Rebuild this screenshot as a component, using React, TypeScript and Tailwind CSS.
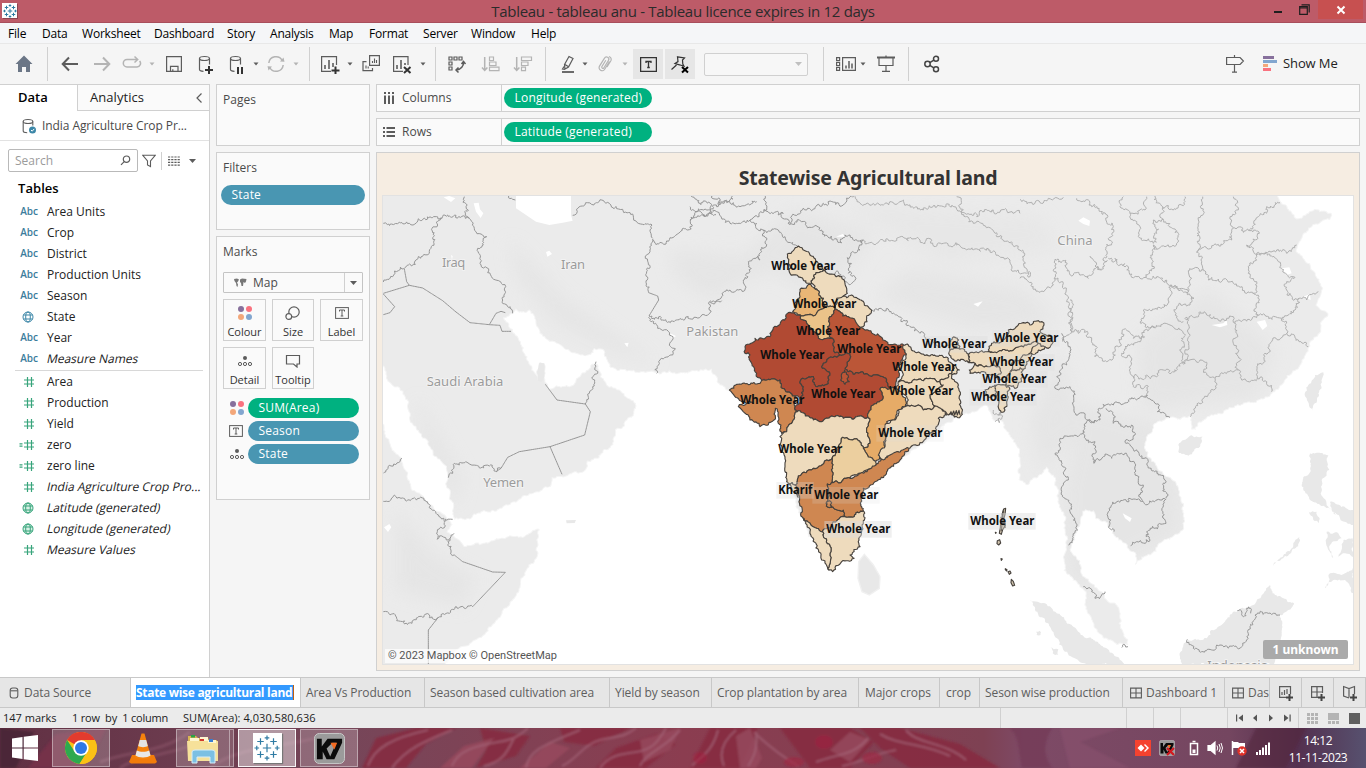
import React from "react";

type Pt = [number, number];

/* ---------- geometry helpers for natural looking borders ---------- */
const noise = (x: number, y: number) => {
  const v = Math.sin(x * 12.9898 + y * 78.233) * 43758.5453;
  return v - Math.floor(v) - 0.5;
};

function split(a: Pt, b: Pt, out: Pt[], amp: number) {
  const dx = b[0] - a[0];
  const dy = b[1] - a[1];
  const len = Math.hypot(dx, dy);
  if (len < 7) {
    out.push(b);
    return;
  }
  const sign = a[0] < b[0] || (a[0] === b[0] && a[1] < b[1]) ? 1 : -1;
  const mx = (a[0] + b[0]) / 2;
  const my = (a[1] + b[1]) / 2;
  const r = noise(mx, my) * amp * sign * Math.min(1, 18 / len);
  const m: Pt = [mx - dy * r, my + dx * r];
  split(a, m, out, amp);
  split(m, b, out, amp);
}

function rough(points: string, closed = false, amp = 0.5) {
  const pts = points
    .trim()
    .split(/\s+/)
    .map((p) => p.split(",").map(Number) as Pt);
  const out: Pt[] = [pts[0]];
  for (let i = 1; i < pts.length; i++) split(pts[i - 1], pts[i], out, amp);
  if (closed) split(pts[pts.length - 1], pts[0], out, amp);
  return "M" + out.map((p) => p[0].toFixed(1) + " " + p[1].toFixed(1)).join("L") + (closed ? "Z" : "");
}

const Line = ({ p, amp = 0.5 }: { p: string; amp?: number }) => <path d={rough(p, false, amp)} />;
const Area = ({ p, amp = 0.5 }: { p: string; amp?: number }) => <path d={rough(p, true, amp)} />;

/* ---------- map data ---------- */
const WEST_SEA =
  "385,385 420,360 430,368 460,362 478,395 500,440 530,455 570,480 610,495 645,495 655,478 680,480 692,510 700,530 740,540 840,550 880,545 1005,540 1020,560 1025,580 1050,600 1100,620 1200,660 1300,740 1250,900 1300,1050 1380,1150 1560,1100 1650,900 1820,740 1850,900 1850,1440 190,1440 210,1420 265,1370 330,1330 380,1270 420,1220 450,1145 485,1100 492,1020 470,1020 455,1032 370,1045 340,1055 265,1068 235,1038 215,1025 235,1005 200,970 150,930 115,900 90,840 75,800 50,780 30,740 20,700 10,690 10,530 22,530 35,575 70,595 95,640 100,690 120,720 155,755 175,800 210,830 220,920 235,990 290,982 320,965 380,955 440,920 525,890 530,865 630,840 635,815 670,805 685,780 712,765 720,720 740,715 775,670 780,640 745,610 700,590 675,560 660,520 630,540 590,585 520,595 508,575 508,525 495,515 483,540 488,570 460,520 455,500 430,450 400,410";

const EAST_SEA =
  "-180,675 -130,665 -100,648 -75,695 -60,692 -20,750 -5,800 -5,870 25,885 80,835 105,865 110,920 130,970 140,1040 130,1140 150,1160 190,1200 200,1265 230,1320 290,1365 325,1365 325,1350 300,1300 298,1255 255,1215 225,1190 185,1150 180,1110 158,1090 160,1060 180,1010 190,965 220,965 225,985 255,995 285,1040 310,1060 345,1090 345,1125 365,1110 410,1085 415,1065 450,1050 480,1030 492,1010 492,940 470,880 430,850 385,800 375,770 385,735 410,700 450,685 480,690 510,680 515,720 530,725 535,700 560,685 640,655 700,640 750,620 770,600 830,540 860,490 870,460 900,430 915,385 925,370 890,345 905,310 910,295 890,260 870,220 830,180 840,155 880,105 930,90 935,70 880,60 830,85 815,65 775,20 775,0 1010,0 1010,1440 -700,1440 -700,1100 -420,850 -240,720";

const COUNTRY_WEST = [
  "22,100 70,97 100,100 140,88 200,80 215,75 240,76 268,85 280,85",
  "200,82 185,105 168,115 166,170 160,190 120,210 85,235 22,276",
  "265,20 270,50 280,85 300,125 320,135 332,140 322,165 308,190 312,220 335,248 368,272 385,300 380,330 395,350 410,370",
  "945,18 980,38 1005,48 1006,72 1020,74",
  "590,76 620,48 665,38 700,40 740,58 770,72 800,103 828,105 830,145",
  "830,148 870,162 895,140 935,120 948,85 1006,72",
  "830,148 822,185 808,205 812,245 818,308",
  "820,376 845,415 880,435 884,470 898,476 890,495 852,510 842,550",
  "820,376 860,390 920,388 960,382 998,372 1000,335 1037,332",
  "660,515 665,550 650,560 650,590 640,610 628,642",
  "22,850 45,828 78,805",
  "22,934 40,934 55,915 75,925 130,925 155,940 180,970 205,995 230,988",
  "205,997 184,1025 184,1048 222,1045 234,1030",
  "222,1045 215,1065 235,1095",
  "22,1265 62,1292 108,1300 125,1283 150,1272 160,1283 186,1283",
  "186,1283 220,1270 230,1258 255,1250 290,1250",
  "217,863 230,850 235,820 250,825 352,834 362,845 375,835",
  "398,18 410,28 418,30",
];
const COUNTRY_WEST_STRAIGHT = [
  "85,237 92,275 100,286 140,294 200,332 240,366 282,398 340,404 372,406 378,424 405,424",
  "340,404 360,370 375,364 388,368",
  "22,310 100,286",
  "22,312 56,350 42,368 22,374",
  "818,308 845,318 848,330 820,376",
  "508,583 543,630 628,642 643,665 626,735 522,770 430,785 395,802 375,835 360,845",
  "522,770 558,853",
  "235,1095 260,1115 350,1146 388,1147 290,1250",
  "186,1283 157,1320 157,1422",
];

const CHINA_LINES = [
  "0,28 30,38 60,38 85,25 130,22",
  "170,25 215,50 262,75 282,125 270,165 250,205 262,212 240,238 205,265 160,255 140,235 128,212 105,208 103,265",
  "210,198 225,228 245,240",
  "265,205 285,205 300,225 325,230 335,262 378,262 420,265 455,285 505,305",
  "310,20 300,50 330,70 375,60 380,20",
  "330,70 360,110 365,145 400,160 410,130 400,90 430,88 475,130 470,160 435,170 400,165 400,215 375,262",
  "405,18 425,48 460,60 485,45 495,20",
  "430,88 430,52",
  "548,20 535,90 530,185 545,215 550,240 505,242 515,265 505,305 522,325 510,345 470,350 468,370 490,395",
  "530,188 590,165 635,150 640,112 635,90 650,60 640,20",
  "640,115 690,122 718,130 680,165 725,190 770,180 800,190 830,165",
  "690,122 715,80 740,50 780,38",
  "725,190 700,215 685,250 710,275 700,310 718,330 715,375",
  "730,190 775,215 785,235 825,262 800,275 800,300 838,325 860,330 895,305",
  "838,325 825,360 790,390",
  "550,242 565,270 640,280 700,312",
  "505,305 465,285 450,320 425,355 370,360 365,385 375,410 405,412 450,405 490,430",
  "495,385 540,365 560,375 620,385 640,380 645,400 700,380 735,375 785,385 800,420 790,435 750,460 735,490 720,520 712,565",
  "645,400 650,430 640,460 655,500 655,540",
  "495,385 495,520 540,510 560,525 560,550 585,565 655,540 665,570 712,565 740,575 755,605",
  "585,565 580,600 545,640 510,680",
  "800,430 835,450 865,470",
  "490,430 485,475 495,520 455,548 430,540 375,565 340,560 340,590 385,590 385,605 370,620",
  "405,415 375,420 370,440 355,455 315,470 305,490 335,510 330,545 345,562",
  "103,265 130,280 145,320 150,380 155,405",
  "155,405 155,420 175,430 190,418 215,450 235,500 260,515 280,505 285,470 300,460 305,440 320,420 340,445 375,440",
  "0,265 25,275 40,298 75,300 100,285 103,265",
];
const COUNTRY_EAST = [
  "125,430 145,470 140,525 110,560 105,595 150,590 162,655 195,680 225,690 240,690 245,655 280,645 320,638 370,620 405,640 412,665 450,682",
  "225,690 200,695 190,722 160,738 120,745 105,790 135,840 145,870 125,905 155,950 160,990 173,1020 145,1065",
  "190,722 205,750 225,755 222,820 250,800 275,805 300,792 325,800 345,830 345,855 370,885 368,932",
  "258,655 280,675 280,700 310,712 335,705 345,735 318,760 355,785 385,815 415,855 435,880 438,925",
  "438,930 415,928 385,942 360,930 290,935 265,965 270,1000 282,1025",
  "435,930 438,1000 405,1015 380,1025 390,1050 350,1055 332,1067",
  "190,1190 215,1205 225,1225 245,1215 255,1205",
  "502,1348 520,1375 545,1385 600,1365 650,1372 680,1350 690,1310 705,1275 740,1268 780,1275",
  "652,1262 670,1280 680,1255 692,1255 692,1270",
  "305,1372 315,1365 324,1370",
];
const MIDDLE_LINES = [
  "160,-105 170,-60 120,-30 160,0 170,30 155,65 150,90 115,95 120,125 100,150 95,180 60,180 35,200 0,212",
  "-60,-70 -20,-45 20,-55 60,-20 120,-30",
  "-60,-30 -20,-60 20,-70 60,-90 80,-105",
  "0,-105 30,-75 90,-70 140,-85",
  "160,0 205,0 225,20 262,48",
  "160,-60 220,-50 235,-20 335,0 370,30 420,15 460,30",
  "235,-20 290,-60 340,-80 400,-75 430,-105",
  "460,30 450,60 420,80 415,120 435,140 425,160 400,150 375,132",
  "485,240 510,235 560,255 600,290 630,310 670,335 730,360 790,390",
];
const MIDDLE_PROVINCES = [
  "460,30 500,40 560,25 630,30 700,40 760,55 840,60 900,90 960,140",
  "420,-105 450,-80 520,-75 580,-90 640,-60 720,-70 800,-40 850,-60 930,-50",
  "740,-100 760,-60 790,-20 860,20 930,60 960,140",
];

const CREAM = "#eedbbd";
const OCHRE = "#cf8751";
const STATES: [string, string][] = [
  [CREAM, "265,48 285,62 300,75 325,105 345,122 312,135 305,160 280,150 240,130 235,100 232,72 250,62"],
  [CREAM, "312,135 345,122 365,132 395,140 405,160 412,190 390,205 375,235 345,232 340,205 322,180 305,160"],
  ["#e9b676", "302,163 322,180 340,205 345,232 310,258 270,255 248,245 255,225 270,200 270,178"],
  ["#ebc389", "345,232 375,235 357,265 355,300 368,325 350,325 325,325 312,305 290,280 270,255 310,258"],
  [CREAM, "375,235 380,205 410,203 425,195 440,203 485,240 470,265 450,292 430,280 415,260 398,258"],
  ["#b14a33", "235,248 270,255 290,280 312,305 325,325 350,325 368,325 375,368 390,375 350,395 335,410 360,430 345,465 315,465 310,440 278,445 280,480 270,510 258,498 225,480 210,450 155,450 125,400 120,375 105,370 105,350 135,325 145,330 180,320 200,290 215,272"],
  ["#bb5637", "375,235 398,258 415,260 450,292 490,312 530,335 580,345 590,370 570,400 568,430 560,475 542,475 530,450 490,435 445,430 415,425 405,415 422,380 410,368 390,375 375,368 368,325 355,300 357,265"],
  ["#b14a33", "390,375 410,368 422,380 405,415 415,425 445,430 490,435 530,450 542,475 510,478 520,500 490,525 475,563 420,562 400,565 365,558 335,575 310,570 262,545 255,530 270,510 280,480 278,445 310,440 315,465 345,465 360,430 335,410 350,395"],
  ["#bb5637", "404,420 414,435 418,455 405,463 392,450 396,430"],
  [OCHRE, "58,480 80,463 150,460 155,450 210,450 225,480 258,498 255,530 262,545 245,580 230,605 215,610 205,580 202,537 196,535 192,570 175,584 150,590 120,570 85,530 130,520 100,515 75,500"],
  [CREAM, "262,545 310,570 335,575 365,558 400,565 420,562 475,563 470,600 480,640 460,655 445,632 398,622 380,655 368,680 350,690 310,715 265,738 255,765 235,760 225,710 210,620 230,605 245,580"],
  ["#e6ab67", "510,478 542,475 560,475 590,520 565,540 555,570 530,575 525,650 505,690 490,690 460,655 480,640 470,600 475,563 490,525 520,500"],
  ["#eccf9f", "398,622 445,632 460,655 490,690 498,705 440,735 420,745 370,758 368,680 380,655"],
  [CREAM, "235,760 255,765 262,790 270,802 250,785"],
  [OCHRE, "265,738 310,715 350,690 368,680 370,758 352,762 355,780 350,825 400,840 405,860 370,875 360,895 335,905 320,895 280,865 275,830 262,790 255,765"],
  [OCHRE, "370,758 420,745 498,705 520,685 560,660 605,648 570,690 530,725 495,755 460,775 455,830 460,843 405,860 400,840 350,825 355,780 352,762"],
  [CREAM, "460,843 463,870 447,930 450,950 420,975 432,985 395,995 368,1025 357,1020 360,970 350,930 335,905 360,895 370,875 405,860"],
  [CREAM, "280,865 320,895 335,905 350,930 360,970 357,1020 335,990 318,940 300,905"],
];
const STATES_EAST: [string, string][] = [
  [CREAM, "70,135 85,135 110,158 150,168 205,175 220,195 205,225 180,245 150,235 110,240 55,245 70,225 50,205 75,180"],
  [CREAM, "55,245 110,240 150,235 180,245 190,255 150,285 165,318 130,330 115,315 75,320 85,300 50,265"],
  [CREAM, "220,195 238,210 215,230 235,255 240,300 242,348 205,345 165,318 150,285 190,255 180,245 205,225"],
  [CREAM, "210,150 240,147 265,165 265,188 240,182 215,175"],
  [CREAM, "212,120 225,112 236,120 240,147 210,150"],
  [CREAM, "75,320 115,315 130,330 165,318 200,345 175,355 170,390 100,435 50,455 0,478 -5,465 15,440 20,370 45,360 55,330"],
  [CREAM, "265,165 320,155 365,152 400,150 440,135 475,130 455,160 420,180 395,190 395,210 375,245 355,240 360,205 330,200 285,190 268,188"],
  [CREAM, "325,150 335,130 365,125 385,90 430,68 450,75 475,62 492,75 480,95 510,105 520,125 505,145 495,140 475,130 440,135 400,150 365,152"],
  [CREAM, "475,130 495,140 455,160 440,185 430,208 395,210 395,190 420,180 440,165"],
  [CREAM, "395,210 430,208 425,245 405,265 375,255 380,235"],
  [CREAM, "268,210 285,190 330,200 360,205 362,222 310,215 270,220"],
  [CREAM, "315,270 345,255 350,290 325,292"],
  [CREAM, "350,255 375,255 388,262 382,300 372,335 358,330 350,290"],
];

const LABELS: [number, number, string, number][] = [
  [803, 266, "Whole Year", 64],
  [824, 304, "Whole Year", 64],
  [828, 331, "Whole Year", 64],
  [869, 349, "Whole Year", 64],
  [792, 355, "Whole Year", 64],
  [924, 367, "Whole Year", 64],
  [954, 344, "Whole Year", 64],
  [1026, 338, "Whole Year", 64],
  [1021, 362, "Whole Year", 64],
  [1014, 379, "Whole Year", 64],
  [1003, 397, "Whole Year", 64],
  [772, 400, "Whole Year", 64],
  [843, 394, "Whole Year", 64],
  [921, 391, "Whole Year", 64],
  [910, 433, "Whole Year", 64],
  [810, 449, "Whole Year", 64],
  [846, 495, "Whole Year", 64],
  [795, 490, "Kharif", 34],
  [858, 529, "Whole Year", 64],
  [1002, 521, "Whole Year", 64],
];

function IndiaMap() {
  return (
    <svg viewBox="21 18 2910 1404" className="block h-[468px] w-[970px]" fontFamily="'Noto Sans', sans-serif">
      <defs>
        <filter id="haze" x="-30%" y="-30%" width="160%" height="160%">
          <feGaussianBlur stdDeviation="26" />
        </filter>
      </defs>
      <rect x="0" y="0" width="3000" height="1500" fill="#ebebeb" />
      <g fill="#e3e3e3" filter="url(#haze)" opacity=".7">
        <path d="M400 150L560 320 700 420 850 520 700 480 540 400 420 260Z" />
        <path d="M880 180L1100 200 1250 60 1500 130 1350 330 1180 240 1000 330 900 260Z" />
        <path d="M1500 320L1800 420 2050 400 1950 300 1600 240Z" />
        <path d="M2050 480L2120 700 2000 850 1960 700Z" />
        <path d="M2280 450L2500 300 2700 480 2640 620 2300 660Z" />
        <path d="M2120 640L2400 720 2420 1030 2080 1200 2060 900Z" />
        <path d="M120 620L150 780 240 950 260 860 180 720Z" />
        <path d="M60 960L180 1100 300 1160 260 1250 60 1200Z" />
        <path d="M1400 40L2000 80 2050 180 1700 220Z" opacity=".6" />
      </g>
      <g fill="#fff" stroke="#f5f5f5" strokeWidth="6">
        <Area p={WEST_SEA} />
        <g transform="translate(1932 0)">
          <Area p={EAST_SEA} />
        </g>
      </g>
      <g fill="#fff">
        <Area p={WEST_SEA} />
        <path d="M420 18V55L450 75 480 95 520 105 560 98 590 92 585 76V10H420Z" />
        <path d="M203 22L220 18 238 25 225 36ZM293 40L308 38 312 58 322 70 314 84 300 65ZM510 186L520 182 528 192 514 200ZM745 460L758 458 754 472ZM882 430L900 438 888 446ZM225 195L230 198 228 210ZM24 1012L40 1002 46 1012 36 1026Z" />
        <path d="M1380 140L1400 132 1410 140ZM1792 342L1820 334 1806 350Z" />
        <g transform="translate(1932 0)">
          <Area p={EAST_SEA} />
          <path d="M175 92L190 82 210 92 208 108 190 102ZM785 235L808 232 815 250 800 255ZM575 405L610 400 620 390 622 405 600 412ZM710 395L735 390 742 408 728 420ZM850 320L870 312 872 330ZM308 970L335 985 330 996 315 985Z" />
        </g>
      </g>
      <g fill="#e8e8e8">
        <path d="M484 545L490 518 505 520 505 560 498 575 486 572ZM570 991L600 990 596 999 572 1000Z" />
        <path d="M1448 1115L1465 1093 1492 1125 1512 1160 1510 1195 1480 1215 1458 1205 1446 1165Z" stroke="#f0f0f0" strokeWidth="4" />
        <g transform="translate(1932 0)">
          <Area p="910,547 905,595 878,662 856,620 865,585 885,555" />
          <Area p="475,765 510,737 548,740 540,770 505,797 475,785" />
          <Area p="30,1230 75,1240 110,1270 160,1310 200,1345 250,1372 290,1400 315,1425 210,1425 130,1380 90,1310 45,1260" />
          <Area p="485,1425 482,1385 505,1350 560,1345 575,1320 610,1300 650,1265 700,1245 750,1185 765,1215 822,1240 780,1275 785,1330 760,1425" />
          <Area p="870,790 925,795 928,840 905,870 902,910 925,950 950,975 915,950 880,935 850,900 848,870 868,850" />
          <Area p="850,900 890,920 910,945 870,930" />
          <Area p="865,965 890,965 895,1000 880,990" />
          <Area p="930,935 1000,960 1000,1005 960,985 935,960" />
          <Area p="920,1025 955,1030 965,1045 930,1065 940,1105 918,1060" />
          <Area p="970,1050 998,1045 1000,1100 975,1090 955,1100" />
          <Area p="760,1128 800,1085 838,1040 836,1060 790,1105" />
          <Area p="915,1195 930,1150 975,1150 1000,1130 1000,1210 975,1170 940,1170" />
          <Area p="48,1325 60,1322 62,1335 50,1335" />
          <Area p="90,1370 115,1378 115,1395 98,1390" />
        </g>
      </g>
      <g fontSize="39" fill="#9b9b9b" stroke="#f4f4f4" strokeWidth="5" paintOrder="stroke">
        <text x="198" y="231" textLength="70">Iraq</text>
        <text x="555" y="236" textLength="72">Iran</text>
        <text x="152" y="587" textLength="230">Saudi Arabia</text>
        <text x="322" y="892" textLength="122">Yemen</text>
        <text x="931" y="439" textLength="156">Pakistan</text>
        <text x="2044" y="165" textLength="106">China</text>
        <text x="2494" y="1439" textLength="182">Indonesia</text>
      </g>
      <g fill="none" stroke="#969696" strokeWidth="3">
        {COUNTRY_WEST.map((p) => (
          <Line key={p} p={p} amp={0.9} />
        ))}
        {COUNTRY_WEST_STRAIGHT.map((p) => (
          <Line key={p} p={p} amp={0} />
        ))}
        <g transform="translate(1932 0)">
          {COUNTRY_EAST.map((p) => (
            <Line key={p} p={p} amp={0.9} />
          ))}
        </g>
        <g transform="translate(1002 120)">
          {MIDDLE_LINES.map((p) => (
            <Line key={p} p={p} amp={1} />
          ))}
        </g>
      </g>
      <g fill="none" stroke="#b0b0b0" strokeWidth="3">
        <g transform="translate(1932 0)">
          {CHINA_LINES.map((p) => (
            <Line key={p} p={p} amp={1} />
          ))}
        </g>
        <g transform="translate(1002 120)">
          {MIDDLE_PROVINCES.map((p) => (
            <Line key={p} p={p} amp={1} />
          ))}
        </g>
        <g transform="translate(1512 330)">
          <Line p="570,0 575,50 570,90 555,110 548,125" amp={1} />
          <Line p="345,365 358,368 362,335 340,330" amp={1} />
        </g>
      </g>
      <g stroke="#47423d" strokeWidth="3.4" strokeLinejoin="round">
        <g transform="translate(1002 120)">
          {STATES.map(([fill, p]) => (
            <path key={p} fill={fill} d={rough(p, true, 0.6)} />
          ))}
          <path fill={OCHRE} d="M350 815l9-3 6 6-4 7 5 4-8 4-9-4 2-7z" />
        </g>
        <g transform="translate(1512 330)">
          {STATES_EAST.map(([fill, p]) => (
            <path key={p} fill={fill} d={rough(p, true, 0.6)} />
          ))}
          <path fill="none" d="M208 345l5-10 3 10 5-12 3 12 5-13 3 13 5-14 3 14" strokeWidth="3.500" />
          <g fill="#cfc2ac">
            <path d="M371 627l6-2-2 18-4 16-6 4 2-22zM362 665l12-4 2 16-8 12-4 14-6-3 3-18zM352 722l7-3 3 10-6 6-5-4zM394 838l6 6 4 12-6 2-5-10z" />
            <path d="M363 776l4 1-3 4zM346 697l3 1-2 2zM376 806l5 3-1 4-4-4zM384 815l6-2 3 6-5 4z" />
            <path d="M366 640l8 30M362 650l14 34M370 632l-6 60" />
          </g>
        </g>
      </g>
      {LABELS.map(([x, y, text, w]) => {
        const cx = (x - 376) * 3;
        const cy = (y - 190) * 3;
        return (
          <g key={x + "-" + y}>
            <rect x={cx - (w * 3) / 2 - 5} y={cy - 24} width={w * 3 + 10} height="50" fill="#dcdcdc" fillOpacity={y > 520 ? 0.45 : x > 930 || x === 795 ? 0.3 : y === 433 || y === 495 ? 0.2 : 0} />
            <text x={cx - (w * 3) / 2 + 1} y={cy + 13} textLength={w * 3} lengthAdjust="spacingAndGlyphs" fontSize="36" fontWeight="700" fill="#111">
              {text}
            </text>
          </g>
        );
      })}
    </svg>
  );
}

/* ---------- small drawing helpers ---------- */
const Ico = ({ className = "", w = 20, h = 20, c = "#5c5c5c", sw = 1.2, children }: { className?: string; w?: number; h?: number; c?: string; sw?: number; children: React.ReactNode }) => (
  <svg width={w} height={h} viewBox={`0 0 ${w} ${h}`} fill="none" stroke={c} strokeWidth={sw} className={"shrink-0 " + className}>
    {children}
  </svg>
);
const Caret = ({ className = "", c = "#5c5c5c" }: { className?: string; c?: string }) => (
  <svg width="6" height="4" viewBox="0 0 6 4" fill={c} className={"shrink-0 " + className}>
    <path d="M.5 0.5h5L3 3.5z" />
  </svg>
);
const Sep = ({ className = "" }: { className?: string }) => <span className={"h-[34px] w-px shrink-0 bg-[#d0d0d0] " + className} />;

const Dots4 = ({ className = "" }: { className?: string }) => (
  <svg width="16" height="16" viewBox="0 0 16 16" className={"shrink-0 " + className}>
    <circle cx="4" cy="4" r="3" fill="#87709c" />
    <circle cx="12" cy="4" r="3" fill="#f9727f" />
    <circle cx="4" cy="12" r="3" fill="#f3a77a" />
    <circle cx="12" cy="12" r="3" fill="#82a6cf" />
  </svg>
);
const DetailIcon = ({ className = "" }: { className?: string }) => (
  <Ico w={16} h={12} sw={1} className={className}>
    <circle cx="8" cy="3" r="2" fill="#5c5c5c" stroke="none" />
    <circle cx="3" cy="9" r="1.6" />
    <circle cx="8" cy="9" r="1.6" />
    <circle cx="13" cy="9" r="1.6" />
  </Ico>
);
const TextIcon = ({ w = 14, h = 12, className = "", sw = 1, c }: { w?: number; h?: number; className?: string; sw?: number; c?: string }) => (
  <Ico w={w} h={h} sw={sw} c={c} className={className}>
    <rect x=".6" y=".6" width={w - 1.2} height={h - 1.2} />
    <path d={`M${w / 2 - 2.5} ${h / 2 - 1.5}v-1.5h5v1.5M${w / 2} ${h / 2 - 3}v6M${w / 2 - 1.3} ${h / 2 + 3}h2.6`} />
  </Ico>
);
const Burst = ({ size = 14 }: { size?: number }) => (
  <svg width={size} height={size} viewBox="0 0 28 28" stroke="#2f7ba3" strokeWidth={size < 20 ? 2 : 1.3} fill="none">
    <path d="M14 9.5v9M9.500 14h9M14 0.500v5M11.500 3h5M14 22.500v5M11.500 25h5M.5 14h5M3 11.500v5M22.500 14h5M25 11.500v5M7 3.500v7M3.500 7h7M21 3.500v7M17.500 7h7M7 17.500v7M3.500 21h7M21 17.500v7M17.500 21h7" />
  </svg>
);

/* ---------- window chrome ---------- */
function TitleBar() {
  return (
    <div className="relative flex h-[23px] items-start border-b border-[#a84e5c] bg-[#bd5b68]">
      <div className="ml-[2px] mt-[3px] flex size-[15px] items-center justify-center bg-white shadow-[1px_1px_0_#8a4450]">
        <Burst size={14} />
      </div>
      <div className="absolute inset-x-0 top-[1px] text-center font-['Open_Sans'] text-[15px] leading-[21px] tracking-[-0.29px] text-[#2b2b2b]">Tableau - tableau anu - Tableau licence expires in 12 days</div>
      <div className="ml-auto flex h-[19px] items-start">
        <span className="mr-[17px] mt-[11px] h-[2px] w-[8px] bg-[#1e1e1e]" />
        <Ico w={11} h={11} c="#1e1e1e" className="mr-[8px] mt-[4px]">
          <path d="M.7 2.700h7.600v7.600H.7zM.7 4h7.600" />
          <path d="M2.500 .8h7.700v7.700" />
        </Ico>
        <span className="mr-[3px] flex h-[19px] w-[45px] items-center justify-center bg-[#c75050]">
          <Ico w={10} h={10} c="#fff" sw={2}>
            <path d="M1.500 1.500l7 7M8.500 1.500l-7 7" />
          </Ico>
        </span>
      </div>
    </div>
  );
}

function MenuBar() {
  const cls = "shrink-0 whitespace-nowrap";
  return (
    <div className="flex h-[21px] items-center border-b border-[#e8e8e8] bg-[#f5f6f8] pl-[8px] pt-[2px] font-['Open_Sans'] text-[12px] tracking-[-0.2px] text-black">
      <span className={cls + " w-[34px]"}>File</span>
      <span className={cls + " w-[40px]"}>Data</span>
      <span className={cls + " w-[72px]"}>Worksheet</span>
      <span className={cls + " w-[73px]"}>Dashboard</span>
      <span className={cls + " w-[43px]"}>Story</span>
      <span className={cls + " w-[59px]"}>Analysis</span>
      <span className={cls + " w-[40px]"}>Map</span>
      <span className={cls + " w-[54px]"}>Format</span>
      <span className={cls + " w-[48px]"}>Server</span>
      <span className={cls + " w-[60px]"}>Window</span>
      <span className={cls}>Help</span>
    </div>
  );
}

function Toolbar() {
  const dim = "#b4b4b4";
  return (
    <div className="flex h-[40px] items-center bg-[#f5f5f5]">
      <Ico className="ml-[14px]" c="none">
        <path d="M10 1.500L18.500 10H16v8h-4v-5H8v5H4v-8H1.500z" fill="#6b7686" />
      </Ico>
      <Sep className="ml-[13px]" />
      <Ico className="ml-[12px]" sw={2}>
        <path d="M18 10H3M9 3.500L2.700 10 9 16.500" />
      </Ico>
      <Ico className="ml-[12px]" sw={2} c={dim}>
        <path d="M2 10h15M11 3.500L17.300 10 11 16.500" />
      </Ico>
      <Ico className="ml-[10px]" sw={1.5} c={dim}>
        <path d="M15.500 5.500H5a3.700 3.700 0 0 0 0 7.400h10a3.600 3.600 0 0 0 2.600-6M12.500 2.500l3.200 3-3.200 3" />
      </Ico>
      <Caret className="ml-[7px]" c={dim} />
      <Ico className="ml-[9px]">
        <path d="M2.600 2.600h14.800v14.800H2.600zM6.500 17.400v-5h7.500v5M8.800 17.400v-2.200" />
      </Ico>
      <Ico className="ml-[12px]">
        <ellipse cx="8.500" cy="4.500" rx="5" ry="2" />
        <path d="M3.500 4.500v11c0 1 2 1.700 4 1.800M13.500 4.500v6" />
        <path d="M9 16h8M13 12v8" stroke="#333" strokeWidth="2" />
      </Ico>
      <Ico className="ml-[10px]">
        <ellipse cx="9.500" cy="4.500" rx="5" ry="2" />
        <path d="M4.500 4.500v11c0 1 2 1.700 4 1.800M14.500 4.500v6" />
        <path d="M12 13v7M16 13v7" stroke="#333" strokeWidth="2" />
      </Ico>
      <Caret className="ml-[7px]" />
      <Ico className="ml-[7px]" c={dim} sw={1.500}>
        <path d="M2.800 9a7.200 7.200 0 0 1 13.500-2.500M17.200 11a7.200 7.200 0 0 1-13.500 2.500" />
        <path d="M14 7.500l4.500.3-1-4.200zM6 12.500l-4.500-.3 1 4.200z" fill={dim} stroke="none" />
      </Ico>
      <Caret className="ml-[7px]" c={dim} />
      <Sep className="ml-[10px]" />
      <Ico className="ml-[10px]" w={22}>
        <path d="M16.500 11V2.600H1.600v14.800H11" />
        <path d="M5 15v-4M9 15V6M13 13V9" strokeWidth="1.600" />
        <path d="M11.500 16.500h8M15.500 12.500v8" stroke="#333" strokeWidth="2" />
      </Ico>
      <Caret className="ml-[5px]" />
      <Ico className="ml-[8px]">
        <path d="M8.600 1.600h9.800v9.800H8.600zM5.500 7.600H2v9h9.500v-2.600" />
        <path d="M11.500 9V7M13.500 9V4.500M15.500 9V6M5 14.500v-3M7.200 14.500v-2" strokeWidth="1.100" />
      </Ico>
      <Ico className="ml-[11px]" w={22}>
        <path d="M16 11V2.600H1.600v14.800H11" />
        <path d="M5 15v-4M9 15V6M13 11V9" strokeWidth="1.600" />
        <path d="M12 13l6.500 6M18.500 13l-6.500 6" stroke="#333" strokeWidth="2" />
      </Ico>
      <Caret className="ml-[6px]" />
      <Sep className="ml-[9px]" />
      <Ico className="ml-[11px]">
        <path d="M2 3h3v3H2zM7 3h3v3H7zM12 3h3v3h-3zM2 8h3v3H2zM2 13h3v3H2z" />
        <path d="M16.500 8c.3 4-2.500 7.500-7 8M14.500 10l2-2.500 2 2.500M11.500 13.500L9 16l2.500 2.500" strokeWidth="1.500" />
      </Ico>
      <Ico className="ml-[14px]" c={dim}>
        <path d="M3.700 3v13M1 13.500l2.700 3 2.700-3" strokeWidth="1.500" />
        <path d="M8.500 3h4v3.500h-4zM8.500 8h6.500v3.500H8.500zM8.500 13.200h9.500v3.500H8.500z" />
      </Ico>
      <Ico className="ml-[12px]" c={dim}>
        <path d="M3.700 3v13M1 13.500l2.700 3 2.700-3" strokeWidth="1.500" />
        <path d="M8.500 3h10v3.500h-10zM8.500 8h6.500v3.500H8.500zM8.500 13.200h4v3.500h-4z" />
      </Ico>
      <Sep className="ml-[12px]" />
      <Ico className="ml-[12px]">
        <path d="M6.500 10.500L11 2.500l4 2-4.500 8.500-3.500 2zM7 10.500l3.500 2.300M6 12.500l-1.500 2.500 2.500.5" />
        <path d="M4 18h12" strokeWidth="1.800" />
      </Ico>
      <Caret className="ml-[4px]" />
      <Ico className="ml-[7px]" c={dim}>
        <path d="M14.500 7.500l-4.800 7.700a3 3 0 0 1-5.200-3.100l5-8a2.200 2.200 0 0 1 4 2.300l-4.700 7.600a1.200 1.200 0 0 1-2-1.200l4-6.500M12 13l4-6.500a3 3 0 0 0-2-4" />
      </Ico>
      <Caret className="ml-[7px]" c={dim} />
      <span className="ml-[5px] flex h-[30px] w-[30px] shrink-0 items-center justify-center bg-[#e6e6e6]">
        <TextIcon w={17} h={15} sw={1.300} c="#333" />
      </span>
      <span className="ml-[2px] flex h-[30px] w-[30px] shrink-0 items-center justify-center bg-[#e6e6e6]">
        <Ico c="#333">
          <path d="M7.500 2.800l7 1.200-2 2 .3 4 1.200 2.300-4.500-1.500-4.500-1.200 3-2zM6.500 11L1.500 15.500" />
          <path d="M12 13l6 5.500M18 13l-6 5.500" stroke="#000" strokeWidth="2" />
        </Ico>
      </span>
      <span className="ml-[9px] flex h-[23px] w-[104px] shrink-0 items-center justify-end rounded-[2px] border border-[#d0d0d0] bg-[#f7f7f7] pr-[5px]">
        <svg width="7" height="4" fill="#c0c0c0">
          <path d="M0 0h7L3.500 4z" />
        </svg>
      </span>
      <Sep className="ml-[15px]" />
      <Ico className="ml-[11px]" w={22}>
        <path d="M1.600 3.600h3v3h-3zM1.600 8.500h3v3h-3zM1.600 13.400h3v3h-3zM7.600 3.600h12.800v12.800H7.600z" />
        <path d="M11 14.500v-3M14 14.500V7M17 14.500V9.500" strokeWidth="1.500" />
      </Ico>
      <Caret className="ml-[3px]" />
      <Ico className="ml-[10px]" w={20}>
        <path d="M1 3.500h18" strokeWidth="2" />
        <path d="M3 4v7.500h14V4M10 11.500V17M6 17.400h8M10 1.500v2" />
      </Ico>
      <Sep className="ml-[12px]" />
      <Ico className="ml-[13px]" sw={1.500} c="#444">
        <circle cx="5.500" cy="10" r="2.700" />
        <circle cx="14" cy="4.800" r="2.500" />
        <circle cx="14" cy="15.200" r="2.500" />
        <path d="M7.800 8.600l4-2.500M7.800 11.400l4 2.500" />
      </Ico>
      <Ico className="ml-auto" w={22}>
        <path d="M2.600 3.500h13.500l3.300 3.500-3.300 3.500H2.600zM10.500 1v2.500M10.500 10.500V18M8 18.200h5" />
      </Ico>
      <svg width="14" height="16" className="ml-[17px] shrink-0">
        <path d="M0 0h11v3H0z" fill="#87709c" />
        <path d="M0 4h14v3H0z" fill="#82a6cf" />
        <path d="M0 8h5v3H0z" fill="#f3a77a" />
        <path d="M0 12h8v3H0z" fill="#f9727f" />
      </svg>
      <span className="ml-[6px] mr-[28px] w-[55px] whitespace-nowrap font-['Open_Sans'] text-[13px] tracking-[-0.1px] text-[#222]">Show Me</span>
    </div>
  );
}

/* ---------- data pane ---------- */
type Kind = "abc" | "globe" | "hash" | "calc" | "gglobe";
const FIELDS_TOP: [Kind, string, boolean?][] = [
  ["abc", "Area Units"],
  ["abc", "Crop"],
  ["abc", "District"],
  ["abc", "Production Units"],
  ["abc", "Season"],
  ["globe", "State"],
  ["abc", "Year"],
  ["abc", "Measure Names", true],
];
const FIELDS_BOTTOM: [Kind, string, boolean?][] = [
  ["hash", "Area"],
  ["hash", "Production"],
  ["hash", "Yield"],
  ["calc", "zero"],
  ["calc", "zero line"],
  ["hash", "India Agriculture Crop Pro...", true],
  ["gglobe", "Latitude (generated)", true],
  ["gglobe", "Longitude (generated)", true],
  ["hash", "Measure Values", true],
];

function FieldIcon({ kind }: { kind: Kind }) {
  if (kind === "abc") return <span className="font-['Open_Sans'] text-[10px] font-semibold tracking-[-0.1px] text-[#3c7d9c]">Abc</span>;
  if (kind === "globe" || kind === "gglobe") {
    const g = kind === "gglobe";
    return (
      <Ico w={12} h={12} sw={1} c={g ? "#37a47b" : "#3c87a8"} className="mr-[2px]">
        <circle cx="6" cy="6" r="5" fill={g ? "#d7f0e5" : "none"} />
        <ellipse cx="6" cy="6" rx="2.300" ry="5" />
        <path d="M1.500 4h9M1.500 8h9" />
      </Ico>
    );
  }
  return (
    <Ico w={18} h={12} sw={1.200} c="#37a47b" className="mr-[4px]">
      <path d="M9.500 1v10M13.500 1v10M6 4h10M6 8h10" />
      {kind === "calc" && <path d="M1.500 4.800h3M1.500 7.200h3" />}
    </Ico>
  );
}

const FieldRow = ({ kind, text, italic }: { kind: Kind; text: string; italic?: boolean }) => (
  <div className="flex h-[21px] items-center">
    <span className="flex w-[29px] shrink-0 justify-center pl-[29px]">
      <FieldIcon kind={kind} />
    </span>
    <span className={"ml-[18px] whitespace-nowrap text-[12px] text-[#222] " + (italic ? "-skew-x-[12deg]" : "")}>{text}</span>
  </div>
);

function DataPane() {
  return (
    <div className="flex w-[210px] shrink-0 flex-col border-r border-t border-[#d0d0d0] bg-white">
      <div className="flex h-[26px]">
        <div className="flex w-[77px] items-center pl-[18px] text-[13px] font-semibold text-black">Data</div>
        <div className="flex flex-1 items-center border-b border-l border-[#d0d0d0] bg-[#fafafa] pl-[12px] text-[13px] tracking-[0.05px] text-[#222]">
          Analytics
          <Ico w={8} h={12} className="ml-auto mr-[6px]">
            <path d="M6.500 1.500L2 6l4.500 4.500" />
          </Ico>
        </div>
      </div>
      <div className="flex h-[30px] items-center border-b border-[#e2e2e2] pl-[22px] text-[12px] text-[#4a4a4a]">
        <Ico w={14} h={16} sw={1.100}>
          <ellipse cx="6" cy="3.500" rx="4.800" ry="2" />
          <path d="M1.200 3.500v9.500c0 1 2 1.700 4 1.700M10.800 3.500v4" />
          <circle cx="10.500" cy="12" r="3.500" fill="#3c87a8" stroke="none" />
          <path d="M9 12l1.200 1.200 2-2.300" stroke="#fff" strokeWidth="1" />
        </Ico>
        <span className="ml-[6px] whitespace-nowrap tracking-[-0.08px]">India Agriculture Crop Pr...</span>
      </div>
      <div className="mt-[8px] flex h-[23px] items-center pl-[8px]">
        <div className="flex h-[23px] w-[130px] items-center justify-between rounded-[2px] border border-[#b9b9b9] px-[6px] text-[12px] text-[#9b9b9b]">
          Search
          <Ico w={11} h={11}>
            <circle cx="6.500" cy="4.200" r="3.200" />
            <path d="M4.200 6.600L1 9.800" />
          </Ico>
        </div>
        <Ico w={14} h={14} sw={1.100} className="ml-[4px]">
          <path d="M.8 1.300h12.400L8.500 7v5.500l-3-1.500V7z" />
        </Ico>
        <span className="ml-[5px] h-[18px] w-px bg-[#d0d0d0]" />
        <svg width="12" height="10" className="ml-[6px]" stroke="#5c5c5c" strokeWidth="1.200" strokeDasharray="2.200 1">
          <path d="M0 1h12M0 3.700h12M0 6.400h12M0 9.100h12" />
        </svg>
        <svg width="7" height="4" className="ml-[9px]" fill="#5c5c5c">
          <path d="M0 0h7L3.500 4z" />
        </svg>
      </div>
      <div className="mt-[7px] flex h-[20px] items-center pl-[18px] text-[13px] font-semibold tracking-[0.05px] text-black">Tables</div>
      <div className="mt-[2px] pb-px">
        {FIELDS_TOP.map(([k, t, i]) => (
          <FieldRow key={t} kind={k} text={t} italic={i} />
        ))}
      </div>
      <div className="ml-[15px] mr-[6px] h-px bg-[#d8d8d8]" />
      <div>
        {FIELDS_BOTTOM.map(([k, t, i]) => (
          <FieldRow key={t} kind={k} text={t} italic={i} />
        ))}
      </div>
    </div>
  );
}

/* ---------- shelves ---------- */
const card = "border border-[#d0d0d0] bg-[#fafafa]";
const pill = "flex h-[20px] items-center rounded-full pl-[10.5px] text-[12px] font-medium tracking-[0.2px] text-white";

function MarkButton({ label, children }: { label: string; children: React.ReactNode }) {
  return (
    <div className="flex h-[42px] flex-col items-center justify-between border border-[#d0d0d0] bg-[#fafafa] pt-[5px] text-[11px] leading-[16px] text-[#333]">
      <span className="flex h-[16px] items-center">{children}</span>
      <span>{label}</span>
    </div>
  );
}

function SideShelves() {
  return (
    <div className="ml-[6px] flex w-[154px] shrink-0 flex-col gap-[6px] text-[12px] text-[#4a4a4a]">
      <div className={card + " h-[62px] pl-[6px] pt-[6px]"}>Pages</div>
      <div className={card + " h-[78px] px-[4px] pt-[6px]"}>
        <div className="pl-[2px] leading-[18px]">Filters</div>
        <div className={pill + " mt-[8px] bg-[#4996b2]"}>State</div>
      </div>
      <div className={card + " h-[264px] px-[6px] pt-[6px]"}>
        <div className="leading-[18px]">Marks</div>
        <div className="mt-[11px] flex h-[21px] w-[140px] items-center rounded-[1px] border border-[#c4c4c4]">
          <svg width="13" height="10" viewBox="0 0 13 10" className="ml-[10px]" fill="#777">
            <path d="M0 1l3-.5 2 1-1 2-1 1 1 2-.5 2.500-1-1L2 5 .5 3zM6 1.500L8 .5 12.500 1 12 3.500 11 5 9.500 4 9 8 7.500 8 7 5 6 4z" />
          </svg>
          <span className="ml-[6px]">Map</span>
          <span className="ml-auto flex h-full w-[18px] items-center justify-center border-l border-[#d0d0d0]">
            <svg width="7" height="4" fill="#5c5c5c">
              <path d="M0 0h7L3.500 4z" />
            </svg>
          </span>
        </div>
        <div className="mt-[6px] grid grid-cols-[43px_42px_43px] gap-[6px]">
          <MarkButton label="Colour">
            <Dots4 />
          </MarkButton>
          <MarkButton label="Size">
            <Ico w={16} h={15} sw={1.200}>
              <circle cx="9" cy="6" r="5.200" />
              <circle cx="3.800" cy="10.500" r="2.900" fill="#fafafa" />
            </Ico>
          </MarkButton>
          <MarkButton label="Label">
            <TextIcon />
          </MarkButton>
          <MarkButton label="Detail">
            <DetailIcon />
          </MarkButton>
          <MarkButton label="Tooltip">
            <Ico w={16} h={14} sw={1.200}>
              <path d="M1.500 1.500h13v8.500h-2.500v3l-3.500-3h-7z" />
            </Ico>
          </MarkButton>
        </div>
        <div className="mt-[9px] flex flex-col gap-[3px]">
          <div className="flex items-center">
            <Dots4 className="ml-[6px] mr-[3px]" />
            <div className={pill + " w-[111px] bg-[#00b180]"}>SUM(Area)</div>
          </div>
          <div className="flex items-center">
            <TextIcon className="ml-[6px] mr-[5px]" />
            <div className={pill + " w-[111px] bg-[#4996b2]"}>Season</div>
          </div>
          <div className="flex items-center">
            <DetailIcon className="ml-[6px] mr-[3px]" />
            <div className={pill + " w-[111px] bg-[#4996b2]"}>State</div>
          </div>
        </div>
      </div>
    </div>
  );
}

function Shelf({ icon, label, value }: { icon: React.ReactNode; label: string; value: string }) {
  return (
    <div className={card + " flex h-[28px] items-center text-[12px] text-[#4a4a4a]"}>
      <div className="flex h-full w-[125px] items-center border-r border-[#d0d0d0] pl-[6px]">
        <span className="w-[13px]">{icon}</span>
        <span className="ml-[6px]">{label}</span>
      </div>
      <div className={pill + " ml-[2px] w-[148px] bg-[#00b180]"}>{value}</div>
    </div>
  );
}

function VizArea() {
  return (
    <div className="ml-[6px] flex w-[984px] flex-col gap-[6px]">
      <Shelf
        label="Columns"
        value="Longitude (generated)"
        icon={
          <svg width="12" height="12" stroke="#5c5c5c" strokeWidth="2" fill="none">
            <path d="M2 0v2M6 0v2M10 0v2M2 3.500v8.500M6 3.500v8.500M10 3.500v8.500" />
          </svg>
        }
      />
      <Shelf
        label="Rows"
        value="Latitude (generated)"
        icon={
          <svg width="12" height="12" stroke="#5c5c5c" strokeWidth="2" fill="none">
            <path d="M0 2h2M0 6h2M0 10h2M3.500 2H12M3.500 6H12M3.500 10H12" />
          </svg>
        }
      />
      <div className="h-[519px] border border-[#d0d0d0] bg-[#f6ede2] px-[5px]">
        <div className="flex h-[42px] items-center justify-center pt-[8px] font-['Noto_Sans'] text-[19.5px] font-bold tracking-[-0.16px] text-[#333]">Statewise Agricultural land</div>
        <div className="relative h-[470px] w-[972px] overflow-hidden border border-[#e2e2e2] bg-white">
          <IndiaMap />
          <div className="absolute bottom-px left-[2px] bg-white/70 px-[3px] font-['Roboto','Liberation_Sans'] text-[11px] leading-[14px] text-[#555]">© 2023 Mapbox © OpenStreetMap</div>
          <div className="absolute bottom-[5px] right-[5px] flex h-[19px] w-[85px] items-center justify-center rounded-[2px] bg-[#aaaaaa] font-['Noto_Sans'] text-[12px] font-bold text-white">1 unknown</div>
        </div>
      </div>
    </div>
  );
}

/* ---------- bottom bars ---------- */
const GridIcon = ({ className = "" }: { className?: string }) => (
  <Ico w={12} h={12} sw={1.100} className={className}>
    <path d="M.6 1.100h10.800v9.800H.6zM6 1v10M.6 6h10.800" />
  </Ico>
);

function SheetTabs() {
  const tab = "flex h-full shrink-0 items-center overflow-hidden whitespace-nowrap border-r border-[#c8c8c8] ";
  return (
    <div className="flex h-[31px] border-b border-t border-[#c8c8c8] bg-[#e6e6e6] text-[12px] tracking-[-0.08px] text-[#5e5e5e]">
      <div className={tab + "w-[131px] pl-[9px]"}>
        <Ico w={10} h={12} sw={1.100} className="mr-[5px]">
          <rect x="1.200" y="1" width="7.600" height="10" rx="2.500" />
          <path d="M1.500 3.800h7" />
        </Ico>
        Data Source
      </div>
      <div className={tab + "w-[170px] bg-white pl-[5px]"}>
        <span className="h-[15px] w-[158px] border-r border-[#c06010] bg-[#3399ff] text-[12px] font-bold leading-[15px] tracking-[-0.29px] text-white">State wise agricultural land</span>
      </div>
      <div className={tab + "w-[124px] pl-[5px]"}>Area Vs Production</div>
      <div className={tab + "w-[185px] pl-[5px]"}>Season based cultivation area</div>
      <div className={tab + "w-[102px] pl-[5px]"}>Yield by season</div>
      <div className={tab + "w-[147px] pl-[5px]"}>Crop plantation by area</div>
      <div className={tab + "w-[81px] pl-[6px]"}>Major crops</div>
      <div className={tab + "w-[40px] pl-[6px]"}>crop</div>
      <div className={tab + "w-[143px] pl-[5px]"}>Seson wise production</div>
      <div className={tab + "w-[102px] pl-[7px]"}>
        <GridIcon className="mr-[4px]" />
        Dashboard 1
      </div>
      <div className={tab + "w-[45px] pl-[7px]"}>
        <GridIcon className="mr-[4px]" />
        Das
      </div>
      <div className={tab + "w-[32px] pl-[8px]"}>
        <Ico w={17} h={16}>
          <path d="M12.500 9V1.600H1.600v10.800H8M4 10V7M6.500 10V5M9 9V4" />
          <path d="M8 12.500h7M11.500 9v7" stroke="#444" strokeWidth="2" />
        </Ico>
      </div>
      <div className={tab + "w-[32px] pl-[8px]"}>
        <Ico w={17} h={16}>
          <path d="M12.500 8V1.600H1.600v10.800H8M7 1.600v11M1.600 7h11" />
          <path d="M8 12.500h7M11.500 9v7" stroke="#444" strokeWidth="2" />
        </Ico>
      </div>
      <div className={tab + "w-[32px] pl-[8px]"}>
        <Ico w={17} h={16}>
          <path d="M12.500 9V1.500L7 3.500 1.600 1.500v9.500L7 13M7 3.500v9" />
          <path d="M8 12.500h7M11.500 9v7" stroke="#444" strokeWidth="2" />
        </Ico>
      </div>
    </div>
  );
}

function StatusBar() {
  return (
    <div className="flex h-[20px] items-center bg-[#ebebeb] pl-[3px] text-[11px] text-[#222]">
      <span className="w-[69px]">147 marks</span>
      <span className="w-[111px] whitespace-nowrap tracking-[-0.2px]">1 row&nbsp; by&nbsp; 1 column</span>
      <span className="tracking-[0.05px]">SUM(Area): 4,030,580,636</span>
      <div className="ml-auto flex h-full">
        <span className="w-[126px] border-l border-[#d0d0d0]" />
        <span className="w-[27px] border-l border-[#d0d0d0]" />
        <span className="w-[27px] border-l border-[#d0d0d0]" />
        <span className="w-[47px] border-l border-[#d0d0d0]" />
        <span className="flex w-[71px] items-center border-l border-[#d0d0d0] pl-[8px]">
          <svg width="56" height="8" fill="#555">
            <path d="M0 .5h1.200v7H0zM7 .5v7L2.500 4zM21 .5v7L17 4zM33 .5v7L37 4zM48 .5v7L52.500 4zM53.500 .5h1.200v7h-1.200z" />
          </svg>
        </span>
        <span className="flex w-[68px] items-center gap-[10px] border-l border-[#d0d0d0] pl-[8px]">
          <svg width="11" height="11" fill="#b4b4b4">
            <path d="M0 0h3v3H0zM4 0h3v3H4zM8 0h3v3H8zM0 4h3v3H0zM4 4h3v3H4zM8 4h3v3H8zM0 8h3v3H0zM4 8h3v3H4zM8 8h3v3H8z" />
          </svg>
          <svg width="11" height="11" fill="#b4b4b4">
            <path d="M0 0h11v7H0zM0 8h3v3H0zM4 8h3v3H4zM8 8h3v3H8z" />
          </svg>
          <svg width="11" height="11" fill="#606060">
            <path d="M0 0h11v11H0z" />
          </svg>
        </span>
      </div>
    </div>
  );
}

const K7 = ({ size }: { size: number }) => (
  <svg width={size} height={size} viewBox="0 0 32 32">
    <rect x=".5" y=".5" width="31" height="31" rx="5" fill="#9b9b9b" stroke="#c8c8c8" />
    <path d="M3 6h5v8l6-8h15v4l-8 17h-5.500l7.500-17h-4l-6 6 5 11h-5l-4-8v8H3z" fill="#0b0b0b" />
    <path d="M17 10h7l-3 7z" fill="#f26a21" />
  </svg>
);

function Wallpaper() {
  return (
    <svg width="1366" height="40" preserveAspectRatio="none" className="absolute inset-0" aria-hidden>
      <defs>
        <linearGradient id="wall" x1="0" x2="1">
          <stop offset="0" stopColor="#613043" />
          <stop offset=".25" stopColor="#764659" />
          <stop offset=".5" stopColor="#8b3d50" />
          <stop offset=".72" stopColor="#7e4153" />
          <stop offset=".75" stopColor="#7e4a66" />
          <stop offset=".9" stopColor="#744660" />
          <stop offset=".95" stopColor="#54304f" />
          <stop offset="1" stopColor="#57516f" />
        </linearGradient>
        <filter id="soft">
          <feGaussianBlur stdDeviation="0.9" />
        </filter>
      </defs>
      <rect width="1366" height="40" fill="url(#wall)" />
      <g filter="url(#soft)">
        <path d="M0 0l34 4L16 40H0z" fill="#4b2637" />
        <path d="M28 40L56 6l50-6-20 40z" fill="#75304a" />
        <path d="M100 34c30-12 60-8 90-30M120 40c20-14 50-12 80-26M210 40c30-24 80-20 130-36" stroke="#8a5467" strokeWidth="3" fill="none" opacity=".6" />
        <path d="M362 40l14-30 40-10h40l-30 16-20 24zM480 0l50 8-14 20-40 12 10-18zM560 0h70l-36 18-30-4zM596 40l20-20 40-14 20 10-30 24zM690 40l20-40h48l-18 40zM780 0h70l24 14-24 26h-40zM860 0h40l60 16 40 24h-90l-30-20z" fill="#862c41" opacity=".85" />
        <path d="M440 40l24-22 30-8-22 30zM520 40l30-26 20 6-24 20zM640 12l40-12-10 22-26 12zM736 8l14-8 12 30-6 10h-16zM830 22l20-18 20 8-20 22z" fill="#96495c" opacity=".9" />
        <g fill="none" stroke="#a5657a" strokeWidth="2.200" opacity=".65">
          <path d="M368 38c6-18 24-28 60-36M392 40c14-20 36-28 60-38M452 38c6-16 24-20 46-24 14-2 22-6 30-14M484 38c20-4 24-16 30-28M526 40c2-18 20-24 54-38M562 38c14-6 22-22 38-26s24-2 36-12M600 40c8-12 20-14 36-16s22-10 30-24M640 38c6-14 26-18 40-36M692 38c6-8 20-12 26-36M724 38c-6-14 0-26 12-36M754 4c10 10 24 22 44 34M748 38c6-8 10-20 8-34M816 34c20-8 38-6 52-24M842 38c16-2 30-12 54-16M880 6c20 12 40 8 70 22M906 2c10 14 40 12 60 30" />
        </g>
        <g fill="#a02340" opacity=".6">
          <ellipse cx="824" cy="14" rx="9" ry="7" />
          <ellipse cx="872" cy="30" rx="10" ry="6" />
          <ellipse cx="794" cy="34" rx="10" ry="5" />
          <ellipse cx="700" cy="30" rx="7" ry="6" />
        </g>
        <path d="M1010 0c10 10 8 24 12 40h30c-10-14-8-26 0-40z" fill="#6d3350" opacity=".5" />
        <path d="M1060 0h60l-40 14 50 26h-60z" fill="#8d5570" opacity=".45" />
        <path d="M1256 0h50l-20 40h-50z" fill="#54243e" opacity=".6" />
      </g>
    </svg>
  );
}

function Taskbar() {
  const cell = "flex h-[38px] shrink-0 items-center justify-center border border-white/40 bg-white/20 ";
  return (
    <div className="relative h-[40px] overflow-hidden bg-[#6b3547]">
      <Wallpaper />
      <div className="relative flex h-full items-center">
        <svg width="26" height="26" viewBox="0 0 26 26" className="ml-[12px] shrink-0" fill="#fff">
          <path d="M0 3.500L10.500 2v10.400H0zM11.700 1.800L26 0v12.400H11.700zM0 13.600h10.500V24L0 22.500zM11.700 13.600H26V26l-14.300-1.800z" />
        </svg>
        <span className={cell + "ml-[14px] w-[58px]"}>
          <svg width="32" height="32" viewBox="0 0 32 32">
            <circle cx="16" cy="16" r="16" fill="#fbc116" />
            <path d="M16 16L2.100 8A16 16 0 0 1 29.900 8H16z" fill="#e33b2e" />
            <path d="M9.500 19.500L2.100 8A16 16 0 0 0 14.500 31.900L22 20z" fill="#2da94f" />
            <path d="M16 8.500h13.900A16 16 0 0 1 14.500 32l8-12.500z" fill="#fbc116" />
            <circle cx="16" cy="16" r="7.700" fill="#fff" />
            <circle cx="16" cy="16" r="6" fill="#2f78e4" />
          </svg>
        </span>
        <svg width="28" height="32" viewBox="0 0 28 32" className="ml-[19px] shrink-0">
          <path d="M3 23h22l3 7-2 1.500H2L0 30z" fill="#f27c0a" />
          <path d="M12.500 1.500h3L22 25c-3 3-13 3-16 0z" fill="#f5820d" />
          <path d="M10.800 8h6.400l1.600 6c-2 1.500-7.600 1.500-9.600 0z" fill="#e4e4e4" />
          <path d="M7.800 18.500c3 1.700 9.400 1.700 12.400 0l1.300 5c-3 2.500-12 2.500-15 0z" fill="#e8e8e8" />
        </svg>
        <span className={cell + "ml-[19px] w-[54px]"}>
          <svg width="32" height="32" viewBox="0 0 32 32">
            <path d="M1 4h8l2 2h10l1 2h8v21H1z" fill="#d9b552" />
            <path d="M0 9h31v20H1z" fill="#f6e19a" />
            <path d="M3 6h9v3H3zM13 5h8v4h-8zM21 8h8v3h-8z" fill="#fdf6d0" />
            <path d="M4 3h4v2.500H4z" fill="#2ba344" />
            <path d="M13 7h4v2h-4z" fill="#d33a2c" />
            <path d="M22 7h4v3h-4z" fill="#3a7fd0" />
            <path d="M5 20q0-2 3-2h17q3 0 3 2v11h-5v-6H10v6H5z" fill="#7cc0e3" stroke="#d6edf8" />
          </svg>
        </span>
        <span className="h-[38px] w-[4px] shrink-0 border border-l-0 border-white/40 bg-white/15" />
        <span className="ml-[4px] flex h-[38px] w-[58px] shrink-0 items-center justify-center border border-white/90 bg-white/45">
          <span className="flex h-[30px] w-[29px] items-center justify-center bg-white shadow-[1px_1px_1px_#777]">
            <Burst size={26} />
          </span>
        </span>
        <span className={cell + "ml-[4px] w-[58px]"}>
          <K7 size={31} />
        </span>
        <svg width="16" height="16" viewBox="0 0 16 16" className="ml-[777px] shrink-0">
          <path d="M0 0h16v16H0z" fill="#f5422f" />
          <path d="M6 4.500L9.500 8 6 11.500 2.500 8zM9 5l1-1 4 4-4 4-1-1 3-3z" fill="#fff" />
        </svg>
        <span className="relative ml-[8px] shrink-0">
          <K7 size={16} />
          <svg width="9" height="9" className="absolute bottom-0 right-0" stroke="#d3181f" strokeWidth="2.200">
            <path d="M1 1l7 7M8 1L1 8" />
          </svg>
        </span>
        <Ico w={10} h={16} c="#fff" sw={1.500} className="ml-[14px]">
          <path d="M1.500 3.500h7v11h-7zM3.500 1.500h3" />
          <path d="M3.500 9.500h3v3.500h-3z" fill="#fff" stroke="none" />
        </Ico>
        <Ico w={16} h={16} c="#fff" sw={1.200} className="ml-[8px]">
          <path d="M1 5.500h3L8 2v12l-4-3.500H1z" fill="#fff" />
          <path d="M10 5.500q1.500 2.500 0 5M12 4q2.500 4 0 8M14 3q3 5 0 10" strokeWidth="1" />
        </Ico>
        <Ico w={17} h={16} c="#fff" sw={1.500} className="ml-[8px]">
          <path d="M1.500 1v14" />
          <path d="M2 2h5l1 1h6v6H8L7 8H2z" fill="#fff" stroke="none" />
          <circle cx="11" cy="11" r="4.700" fill="#df3128" stroke="none" />
          <path d="M9 9l4 4M13 9l-4 4" />
        </Ico>
        <svg width="15" height="13" className="ml-[8px] shrink-0" fill="#fff">
          <path d="M0 10h2v3H0zM3 8h2v5H3zM6 5.500h2V13H6zM9 3h2v10H9zM12 .5h2V13h-2z" />
        </svg>
        <div className="ml-auto mr-[14px] w-[68px] pt-[2px] text-center font-['Open_Sans'] text-[12px] leading-[17px] tracking-[-0.4px] text-white">
          <div>14:12</div>
          <div>11-11-2023</div>
        </div>
      </div>
    </div>
  );
}

export default function App() {
  return (
    <div className="flex h-[768px] w-[1366px] flex-col overflow-hidden bg-[#f5f5f5] font-['Open_Sans',sans-serif]">
      <TitleBar />
      <MenuBar />
      <Toolbar />
      <div className="flex h-[593px]">
        <DataPane />
        <SideShelves />
        <VizArea />
      </div>
      <SheetTabs />
      <StatusBar />
      <Taskbar />
    </div>
  );
}
